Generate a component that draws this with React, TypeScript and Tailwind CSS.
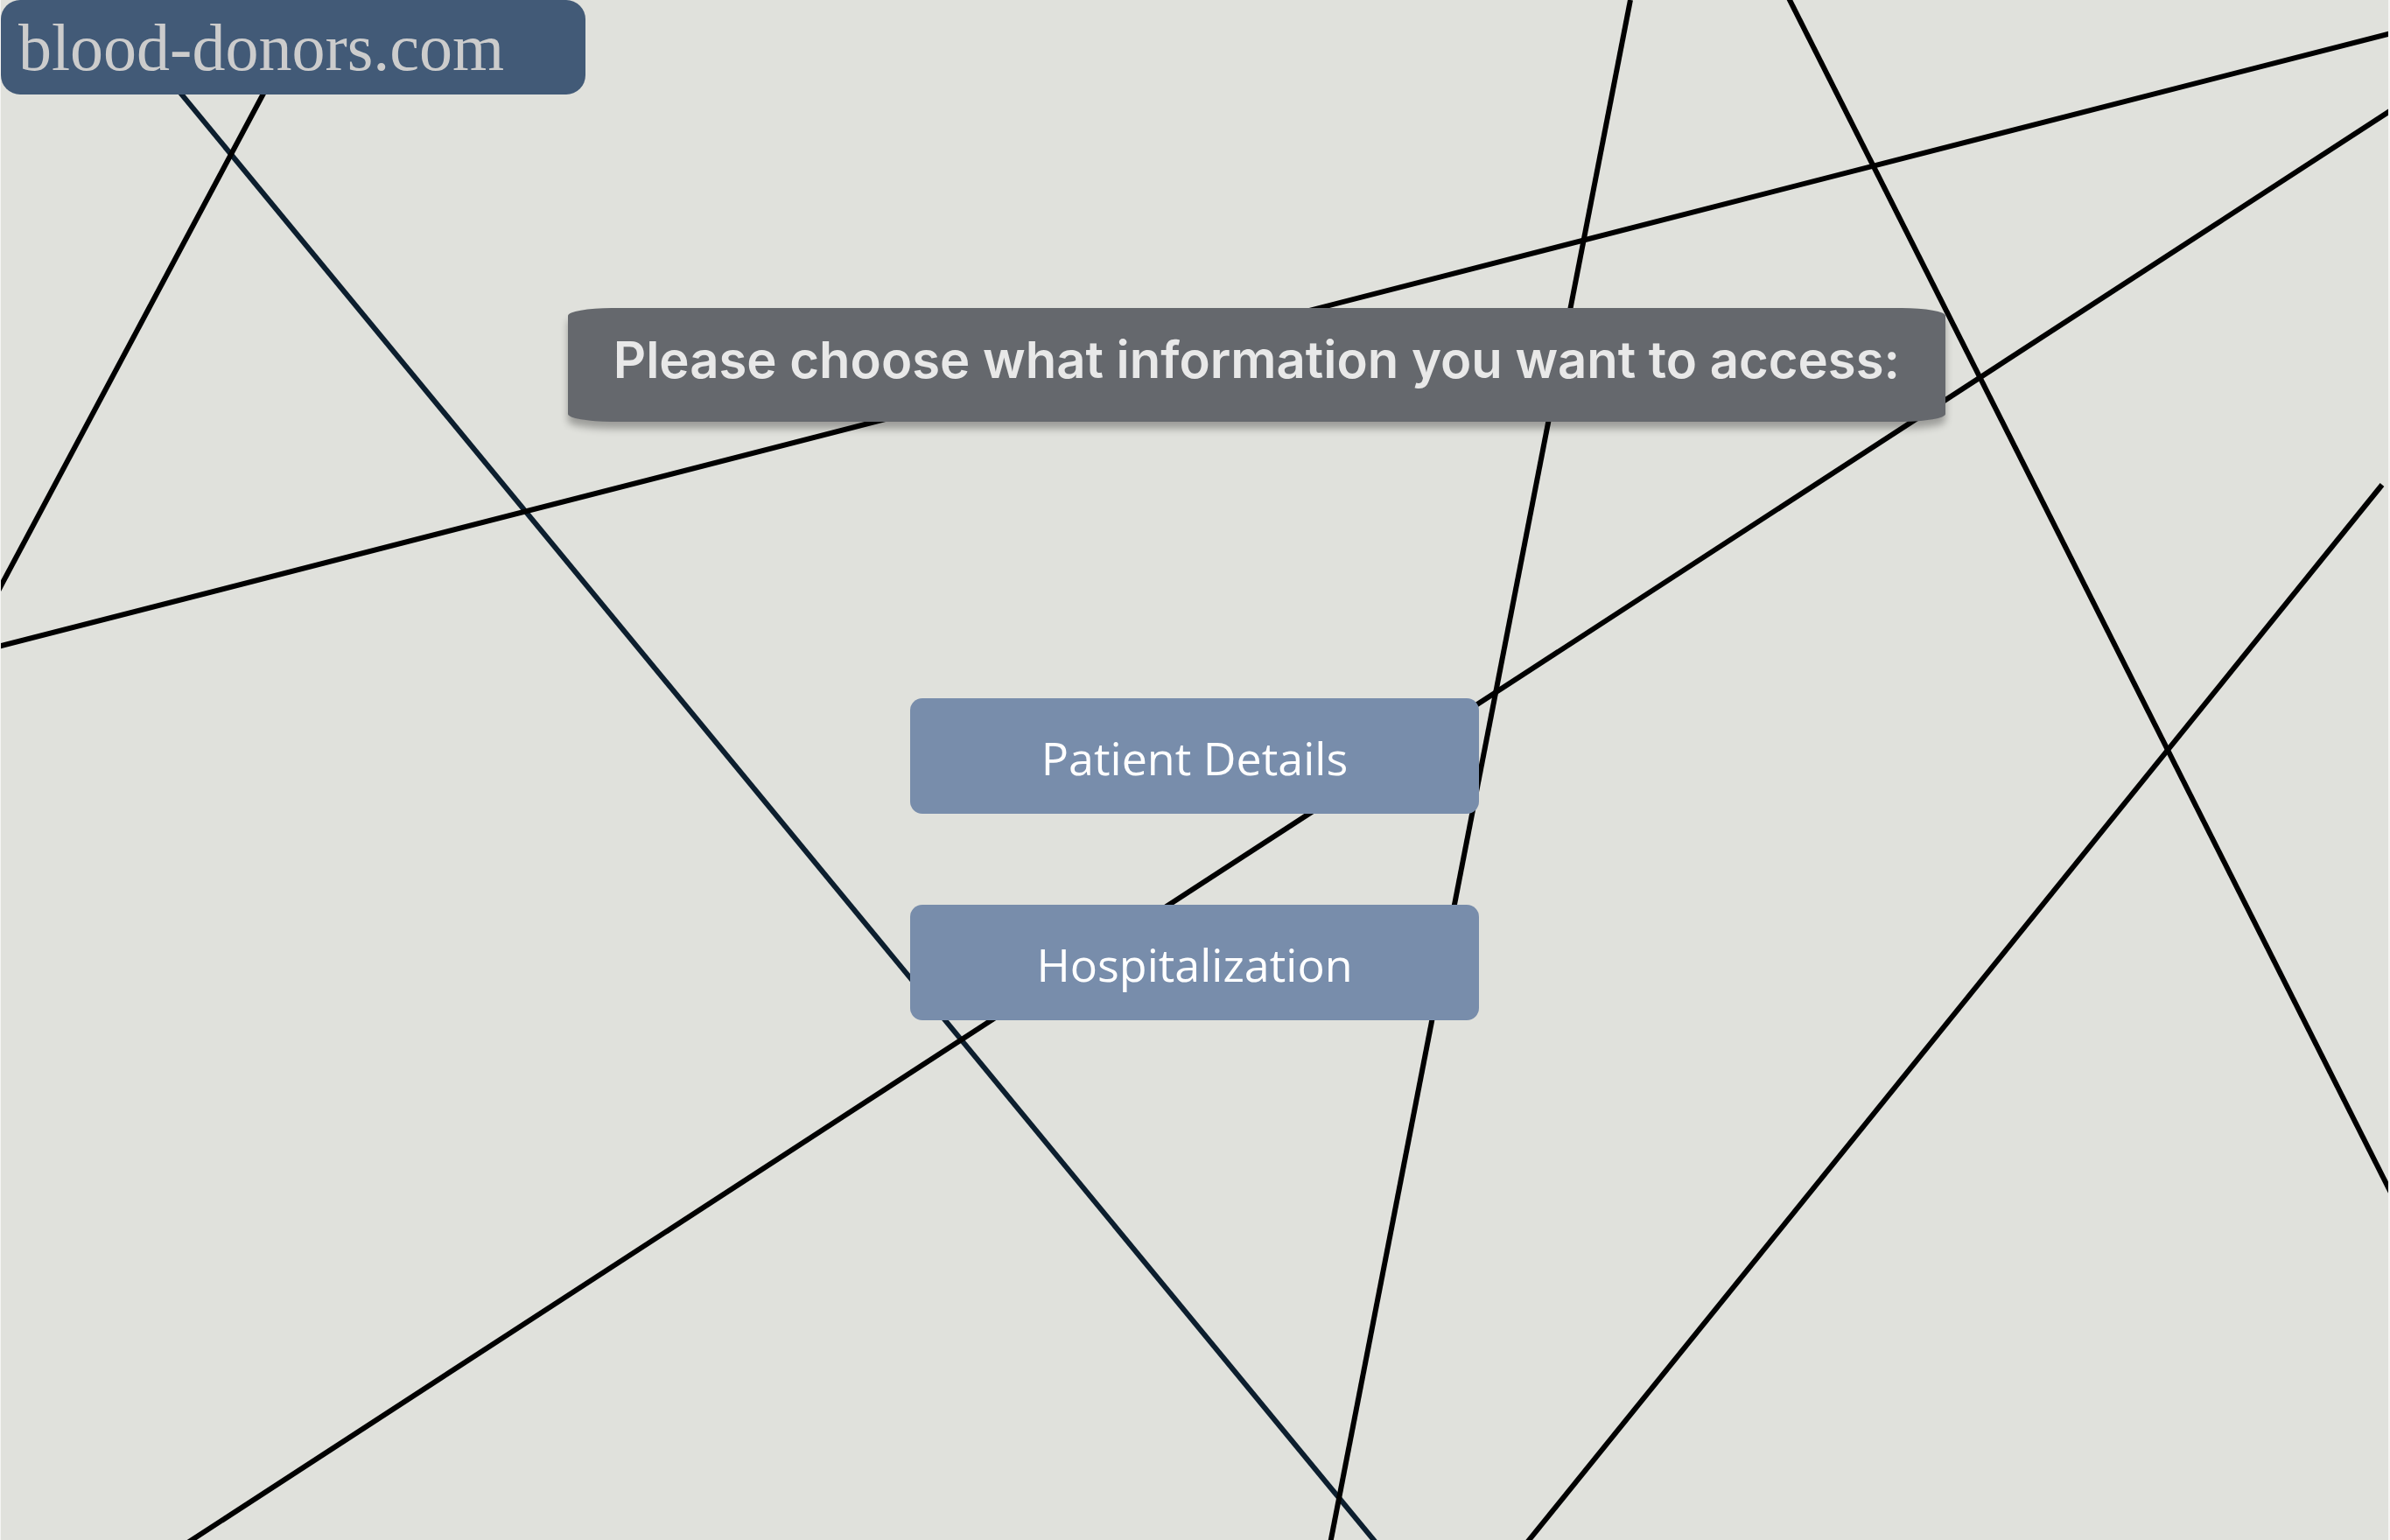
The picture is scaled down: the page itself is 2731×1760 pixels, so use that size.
const lines = [
  { x1: 112, y1: -8, x2: 1578, y2: 1770, stroke: "#0c1e2e" },
  { x1: 358, y1: 0, x2: -4, y2: 679, stroke: "#000000" },
  { x1: -10, y1: 741, x2: 2740, y2: 36, stroke: "#000000" },
  { x1: 1863, y1: 0, x2: 1520, y2: 1764, stroke: "#000000" },
  { x1: 2042, y1: -6, x2: 2740, y2: 1379, stroke: "#000000" },
  { x1: 2722, y1: 554, x2: 1744, y2: 1764, stroke: "#000000" },
  { x1: 2740, y1: 121, x2: 213, y2: 1764, stroke: "#000000" },
];

function Backdrop() {
  return (
    <svg
      className="absolute inset-0 h-full w-full"
      viewBox="1 0 2728 1760"
      preserveAspectRatio="none"
      aria-hidden="true"
    >
      {lines.map((line) => (
        <line key={line.x1} {...line} strokeWidth={6} />
      ))}
    </svg>
  );
}

function ChoiceButton({ label }: { label: string }) {
  return (
    <button
      type="button"
      className="flex h-[132px] w-full cursor-pointer items-center justify-center rounded-[14px] bg-[#788dab] pt-1 font-['Open_Sans',sans-serif] text-[52px] leading-[64px] whitespace-nowrap text-white"
    >
      {label}
    </button>
  );
}

export default function App() {
  return (
    <div className="min-h-screen bg-[#f4f4f2] pr-0.5 pl-px">
      <div className="relative min-h-screen overflow-hidden bg-[#e0e1dc]">
        <Backdrop />
        <div className="relative flex flex-col">
          <header className="flex h-[108px] w-[668px] items-center rounded-[22px] bg-[#425a77] px-5">
            <a
              href="#"
              className="font-['Liberation_Serif',serif] text-[76px] leading-[100px] whitespace-nowrap text-[#cccccc]"
            >
              blood-donors.com
            </a>
          </header>
          <main className="flex flex-col pt-[244px]">
            <h1 className="ml-[23.75%] flex h-[130px] w-[57.7%] items-center justify-center rounded-[50px/9px] bg-[#65686d] pb-3 font-['Inter',sans-serif] text-[58px] leading-[64px] font-semibold whitespace-nowrap text-[#e8e8e8] shadow-[0_8px_8px_rgba(0,0,0,0.3)]">
              Please choose what information you want to access:
            </h1>
            <nav className="mx-auto mt-[316px] flex w-[650px] flex-col gap-[104px]">
              <ChoiceButton label="Patient Details" />
              <ChoiceButton label="Hospitalization" />
            </nav>
          </main>
        </div>
      </div>
    </div>
  );
}
